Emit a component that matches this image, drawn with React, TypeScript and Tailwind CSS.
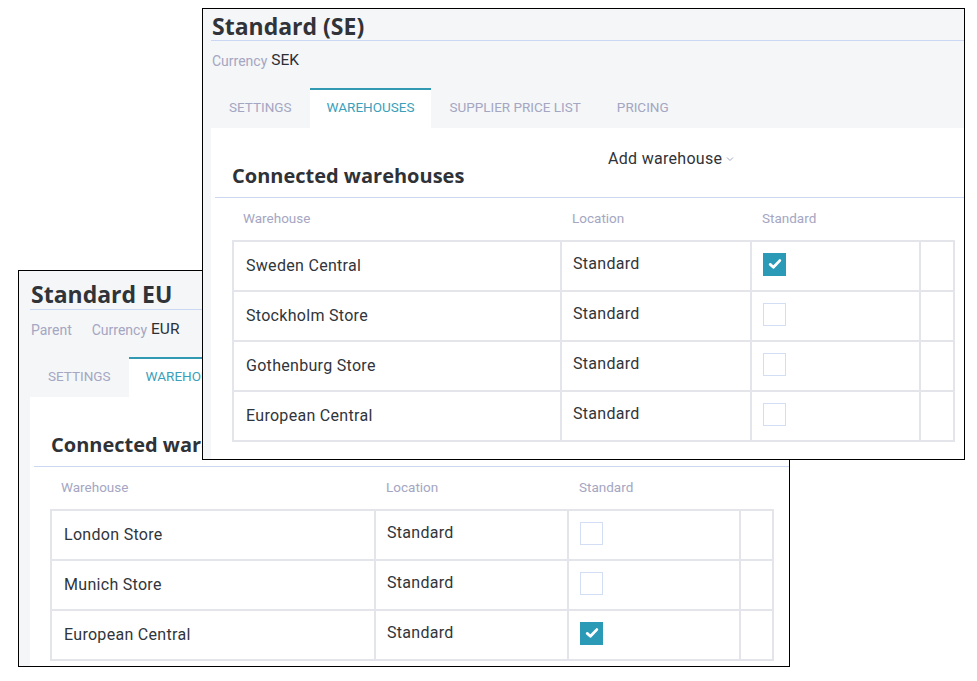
import React from "react";

type Row = { name: string; checked: boolean };

const body = "font-['Roboto','Liberation_Sans',sans-serif]";
const heading = "font-['Open_Sans','Liberation_Sans',sans-serif]";

function Box({ checked }: { checked: boolean }) {
  if (checked) {
    return (
      <div className="w-[23px] h-[23px] bg-[#2a9ab6] flex items-center justify-center">
        <svg width="14" height="12" viewBox="0 0 14 12">
          <path d="M2.2 6.4 L5.4 9.2 L11.8 2.6" stroke="#ffffff" strokeWidth="2.8" fill="none" strokeLinecap="round" strokeLinejoin="round" />
        </svg>
      </div>
    );
  }
  return <div className="w-[23px] h-[23px] bg-white border border-[#d3ddf3]" />;
}

type WinProps = {
  pos: string;
  side: string;
  titleBox: string;
  title: string;
  parent?: boolean;
  currency: string;
  cols: string;
  headingWidth: string;
  tableMargin: string;
  rows: Row[];
};

function Window(p: WinProps) {
  const tabs = ["SETTINGS", "WAREHOUSES", "SUPPLIER PRICE LIST", "PRICING"];
  return (
    <div className={`absolute bg-[#f5f6f8] border border-black overflow-hidden flex flex-col ${body} ${p.pos}`}>
      <div className={`${p.side} border-b border-[#cbd7f3] ${p.titleBox}`}>
        <h1 className={`pl-[1px] text-[23px] leading-[30px] font-bold text-[#303338] whitespace-nowrap ${heading}`}>{p.title}</h1>
      </div>
      <div className={`${p.side} mt-[12px] h-[16px] pl-[1px] flex items-center whitespace-nowrap`}>
        {p.parent && <span className="text-[14px] text-[#a4a6c2] mr-[20px]">Parent</span>}
        <span className="text-[14px] text-[#a4a6c2]">Currency</span>
        <span className="ml-[4px] text-[15.5px] text-[#2c3036]">{p.currency}</span>
      </div>
      <div className={`${p.side} mt-[19px] flex h-[40px] whitespace-nowrap`}>
        {tabs.map((t) => {
          const active = t === "WAREHOUSES";
          return (
            <div
              key={t}
              className={
                active
                  ? "h-[40px] px-[17px] pt-[9px] border-t-2 border-[#3299b3] bg-white text-[13.5px] leading-[16px] text-[#3a9fba]"
                  : "h-[40px] px-[18px] pt-[9px] border-t-2 border-transparent text-[13.5px] leading-[16px] text-[#a4a6c2]"
              }
            >
              {t}
            </div>
          );
        })}
      </div>
      <div className={`${p.side} flex-1 bg-white flex flex-col`}>
        <div className="ml-[4px] h-[70px] border-b border-[#cbd7f3] flex items-start">
          <div className={`${p.headingWidth} shrink-0 pl-[17px] pt-[34px]`}>
            <h2 className={`text-[20px] leading-[28px] font-bold text-[#2f3237] whitespace-nowrap ${heading}`}>Connected warehouses</h2>
          </div>
          <div className="mt-[21px] h-[20px] flex items-center">
            <span className="text-[16px] leading-[20px] tracking-[0.3px] text-[#2f3338] whitespace-nowrap">Add warehouse</span>
            <svg className="ml-[4px]" width="8" height="6" viewBox="0 0 8 6">
              <path d="M1 1.5 L4 4.5 L7 1.5" stroke="#a4a6c2" strokeWidth="1" fill="none" />
            </svg>
          </div>
        </div>
        <div className={`${p.tableMargin} w-max`}>
          <div className={`grid ${p.cols} h-[42px] px-[2px] text-[13.5px] leading-[16px] text-[#a4a6c2] pt-[12px]`}>
            <div className="pl-[9px]">Warehouse</div>
            <div className="pl-[12px]">Location</div>
            <div className="pl-[12px]">Standard</div>
            <div />
          </div>
          <div className="border-2 border-[#e3e5eb]">
            {p.rows.map((r, i) => (
              <div key={r.name} className={`grid ${p.cols} ${i === 0 ? "h-[48px]" : "h-[50px] border-t-2 border-[#e3e5eb]"}`}>
                <div className="pl-[12px] pb-[1px] flex items-center text-[16px] tracking-[0.3px] text-[#30353b] whitespace-nowrap">{r.name}</div>
                <div className="border-l-2 border-[#e3e5eb] pl-[11px] pb-[5px] flex items-center text-[16px] tracking-[0.3px] text-[#30353b]">Standard</div>
                <div className="border-l-2 border-[#e3e5eb] pl-[11px] pb-[4px] flex items-center">
                  <Box checked={r.checked} />
                </div>
                <div className="border-l-2 border-[#e3e5eb]" />
              </div>
            ))}
          </div>
        </div>
      </div>
    </div>
  );
}

export default function App() {
  return (
    <div className="relative w-[977px] h-[681px] bg-white overflow-hidden">
      <Window
        pos="left-[18px] top-[270px] w-[772px] h-[397px]"
        side="ml-[11px]"
        titleBox="h-[39px] pt-[8px]"
        title="Standard EU"
        parent
        currency="EUR"
        cols="grid-cols-[322px_193px_172px_33px]"
        headingWidth="w-[393px]"
        tableMargin="ml-[20px]"
        rows={[
          { name: "London Store", checked: false },
          { name: "Munich Store", checked: false },
          { name: "European Central", checked: true },
        ]}
      />
      <Window
        pos="left-[202px] top-[8px] w-[763px] h-[452px]"
        side="ml-[8px]"
        titleBox="h-[32px] pt-[2px]"
        title="Standard (SE)"
        currency="SEK"
        cols="grid-cols-[326px_190px_169px_34px]"
        headingWidth="w-[393px]"
        tableMargin="ml-[21px]"
        rows={[
          { name: "Sweden Central", checked: true },
          { name: "Stockholm Store", checked: false },
          { name: "Gothenburg Store", checked: false },
          { name: "European Central", checked: false },
        ]}
      />
    </div>
  );
}
